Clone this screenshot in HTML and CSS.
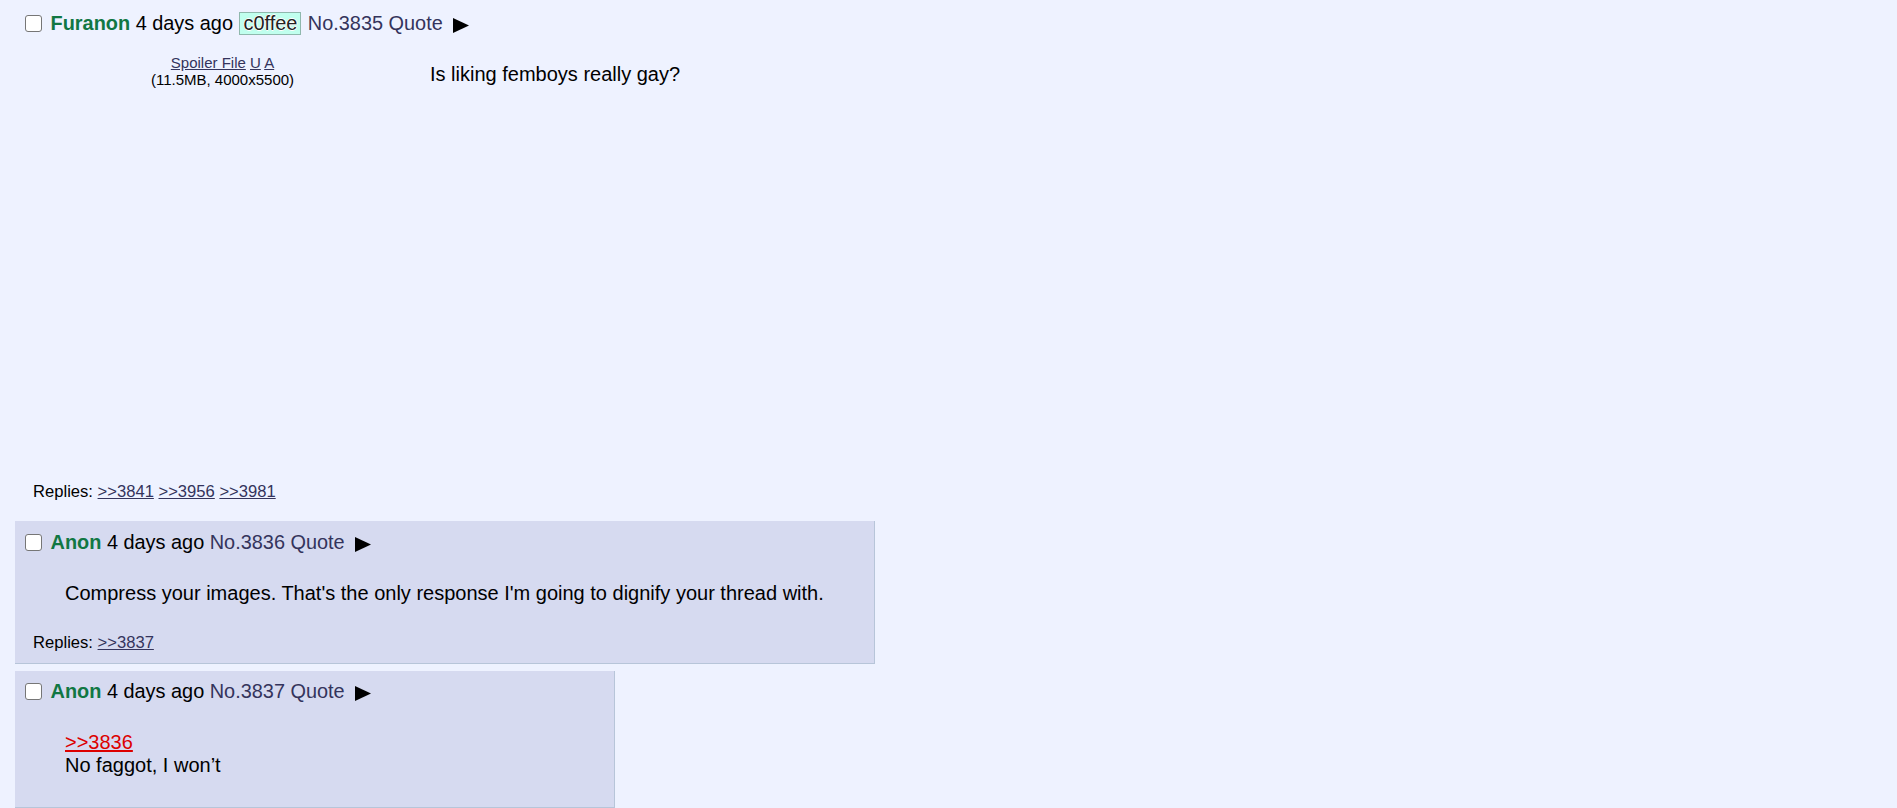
FILE: index.html
```html
<!DOCTYPE html>
<html lang="en">
<head>
<meta charset="utf-8">
<title>Thread</title>
<link rel="stylesheet" href="styles.css">
</head>
<body>
<div class="thread">
  <div class="op">
    <div class="post-header"><input type="checkbox" class="post-check"> <span class="name">Furanon</span> <span class="date">4 days ago</span> <span class="poster-id">c0ffee</span> <a class="post-no">No.3835</a> <a class="quote-btn">Quote</a> <span class="menu-arrow"><svg width="16" height="15" viewBox="0 0 16 15"><polygon points="0,0 16,7.5 0,15" fill="#000"/></svg></span></div>
    <div class="op-body">
      <div class="file">
        <div class="file-info"><a class="file-link">Spoiler File</a> <a class="file-link">U</a> <a class="file-link">A</a><br>(11.5MB, 4000x5500)</div>
        <div class="file-thumb"></div>
      </div>
      <blockquote class="message">Is liking femboys really gay?</blockquote>
    </div>
    <div class="replies">Replies: <a class="reply-link">&gt;&gt;3841</a> <a class="reply-link">&gt;&gt;3956</a> <a class="reply-link">&gt;&gt;3981</a></div>
  </div>

  <div class="reply-wrap">
    <div class="reply">
      <div class="post-header"><input type="checkbox" class="post-check"> <span class="name">Anon</span> <span class="date">4 days ago</span> <a class="post-no">No.3836</a> <a class="quote-btn">Quote</a> <span class="menu-arrow"><svg width="16" height="15" viewBox="0 0 16 15"><polygon points="0,0 16,7.5 0,15" fill="#000"/></svg></span></div>
      <blockquote class="message">Compress your images. That's the only response I'm going to dignify your thread with.</blockquote>
      <div class="replies">Replies: <a class="reply-link">&gt;&gt;3837</a></div>
    </div>
  </div>

  <div class="reply-wrap">
    <div class="reply">
      <div class="post-header"><input type="checkbox" class="post-check"> <span class="name">Anon</span> <span class="date">4 days ago</span> <a class="post-no">No.3837</a> <a class="quote-btn">Quote</a> <span class="menu-arrow"><svg width="16" height="15" viewBox="0 0 16 15"><polygon points="0,0 16,7.5 0,15" fill="#000"/></svg></span></div>
      <blockquote class="message"><a class="quotelink">&gt;&gt;3836</a><br>No faggot, I won’t</blockquote>
    </div>
  </div>
</div>
</body>
</html>
```

FILE: styles.css
```css
html, body {
  margin: 0;
  padding: 0;
}

body {
  background: #eef2ff;
  color: #000;
  font-family: "Liberation Sans", Arial, sans-serif;
  font-size: 20px;
}

.thread {
  padding: 12px 15px 0;
}

.op {
  padding: 0 10px;
}

.post-header {
  font-size: 19.9px;
  line-height: 23px;
  white-space: nowrap;
}

.post-check {
  appearance: none;
  -webkit-appearance: none;
  box-sizing: border-box;
  width: 17px;
  height: 17px;
  margin: 0 3px 0 0;
  border: 1px solid #767676;
  border-radius: 3px;
  background: #fff;
  vertical-align: middle;
  position: relative;
  top: -1px;
}

.name {
  color: #117743;
  font-weight: bold;
}

.poster-id {
  display: inline-block;
  background: #c0ffee;
  border: 1px solid #8fb8ad;
  padding: 0 3px;
  margin: 0 1px;
  line-height: 21px;
  color: #222;
  text-shadow: -1px 0 #fff, 1px 0 #fff, 0 -1px #fff, 0 1px #fff, 0 0 1px #333;
}

.post-no,
.quote-btn {
  color: #34345c;
  text-decoration: none;
}

.menu-arrow {
  margin-left: 5px;
}

.menu-arrow svg {
  vertical-align: -3px;
}

.op-body {
  display: flex;
  align-items: flex-start;
}

.file {
  flex: none;
  width: 335px;
  margin: 19px 0 0 30px;
}

.file-info {
  font-size: 15px;
  line-height: 17px;
  text-align: center;
}

.file-link {
  color: #34345c;
  text-decoration: underline;
}

.file-thumb {
  height: 374px;
}

.message {
  margin: 28px 40px;
  line-height: 23px;
}

.replies {
  font-size: 16.6px;
  line-height: 19px;
  margin: 0 0 0 8px;
}

.op .replies {
  margin-top: 20px;
}

.reply .replies {
  margin-bottom: 9px;
}

.reply-link {
  color: #34345c;
  text-decoration: underline;
}

.reply-wrap {
  margin-top: 20px;
}

.reply-wrap + .reply-wrap {
  margin-top: 7px;
}

.reply {
  width: fit-content;
  min-width: 600px;
  box-sizing: border-box;
  background: #d6daf0;
  border-right: 1px solid #b7c5d9;
  border-bottom: 1px solid #b7c5d9;
  padding: 9.5px 10px 2px;
}

.quotelink {
  color: #dd0000;
  text-decoration: underline;
}
```
